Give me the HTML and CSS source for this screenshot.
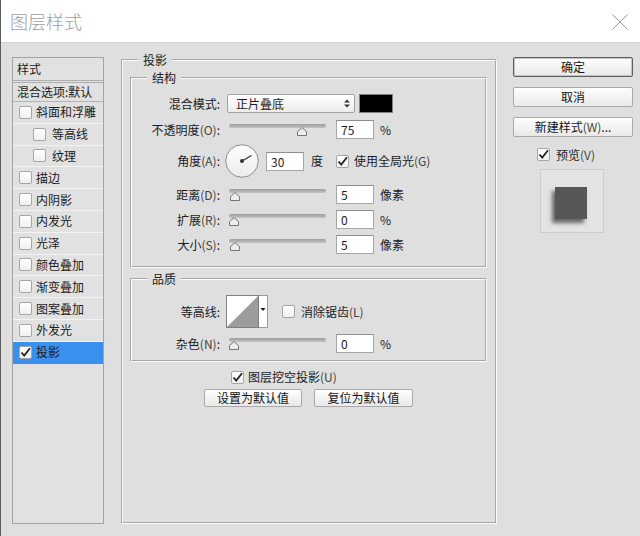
FILE: index.html
```html
<!DOCTYPE html>
<html lang="zh-CN">
<head>
<meta charset="utf-8">
<title>图层样式</title>
<link rel="stylesheet" href="styles.css">
</head>
<body>
<div class="window">
  <header class="titlebar">
    <h1 class="title">图层样式</h1>
    <svg class="close" width="16" height="16" viewBox="0 0 16 16"><path d="M0.5 0.5L15.5 15.5M15.5 0.5L0.5 15.5"/></svg>
  </header>

  <div class="content">
    <aside class="style-list">
      <div class="list-head">样式</div>
      <div class="list-blend">混合选项:默认</div>
      <div class="item"><span class="cb"></span><span class="item-text">斜面和浮雕</span></div>
      <div class="item sub"><span class="cb"></span><span class="item-text">等高线</span></div>
      <div class="item sub"><span class="cb"></span><span class="item-text">纹理</span></div>
      <div class="item"><span class="cb"></span><span class="item-text">描边</span></div>
      <div class="item"><span class="cb"></span><span class="item-text">内阴影</span></div>
      <div class="item"><span class="cb"></span><span class="item-text">内发光</span></div>
      <div class="item"><span class="cb"></span><span class="item-text">光泽</span></div>
      <div class="item"><span class="cb"></span><span class="item-text">颜色叠加</span></div>
      <div class="item"><span class="cb"></span><span class="item-text">渐变叠加</span></div>
      <div class="item"><span class="cb"></span><span class="item-text">图案叠加</span></div>
      <div class="item"><span class="cb"></span><span class="item-text">外发光</span></div>
      <div class="item selected"><span class="cb on"><svg viewBox="0 0 13 13"><path d="M2.5 6.5L5.2 9.6L11 2.2"/></svg></span><span class="item-text">投影</span></div>
    </aside>

    <fieldset class="group outer">
      <legend>投影</legend>

      <fieldset class="group inner">
        <legend>结构</legend>

        <div class="row r-blend">
          <label class="lbl">混合模式:</label>
          <div class="select"><span>正片叠底</span><svg class="updown" width="6" height="9" viewBox="0 0 6 9"><path d="M0 3.5L3 0.5L6 3.5Z M0 5.5L3 8.5L6 5.5Z"/></svg></div>
          <div class="swatch"></div>
        </div>

        <div class="row r-opacity">
          <label class="lbl">不透明度<span class="key">(O)</span>:</label>
          <div class="slider"><div class="track"></div><svg class="thumb" style="left:68px" width="10" height="9" viewBox="0 0 10 9"><path d="M0.5 8.5V4.5L5 0.7L9.5 4.5V8.5Z"/></svg></div>
          <div class="field">75</div>
          <span class="unit">%</span>
        </div>

        <div class="row r-angle">
          <label class="lbl">角度<span class="key">(A)</span>:</label>
          <svg class="dial" width="34" height="34" viewBox="0 0 34 34">
            <defs><linearGradient id="dg" x1="0" y1="0" x2="0" y2="1"><stop offset="0" stop-color="#ffffff"/><stop offset="1" stop-color="#ececec"/></linearGradient></defs>
            <circle cx="17" cy="17" r="16.3" fill="url(#dg)" stroke="#8c8c8c"/>
            <path d="M17 17L26.5 11.5" stroke="#3a3a3a" stroke-width="1.3"/>
            <circle cx="17" cy="17" r="2" fill="#333"/>
          </svg>
          <div class="field f-angle">30</div>
          <span class="unit u-deg">度</span>
          <span class="cb on c-global"><svg viewBox="0 0 13 13"><path d="M2.5 6.5L5.2 9.6L11 2.2"/></svg></span>
          <span class="cb-text">使用全局光<span class="key">(G)</span></span>
        </div>

        <div class="row r-distance">
          <label class="lbl">距离<span class="key">(D)</span>:</label>
          <div class="slider"><div class="track"></div><svg class="thumb" style="left:1px" width="10" height="9" viewBox="0 0 10 9"><path d="M0.5 8.5V4.5L5 0.7L9.5 4.5V8.5Z"/></svg></div>
          <div class="field">5</div>
          <span class="unit">像素</span>
        </div>

        <div class="row r-spread">
          <label class="lbl">扩展<span class="key">(R)</span>:</label>
          <div class="slider"><div class="track"></div><svg class="thumb" style="left:0px" width="10" height="9" viewBox="0 0 10 9"><path d="M0.5 8.5V4.5L5 0.7L9.5 4.5V8.5Z"/></svg></div>
          <div class="field">0</div>
          <span class="unit">%</span>
        </div>

        <div class="row r-size">
          <label class="lbl">大小<span class="key">(S)</span>:</label>
          <div class="slider"><div class="track"></div><svg class="thumb" style="left:1px" width="10" height="9" viewBox="0 0 10 9"><path d="M0.5 8.5V4.5L5 0.7L9.5 4.5V8.5Z"/></svg></div>
          <div class="field">5</div>
          <span class="unit">像素</span>
        </div>
      </fieldset>

      <fieldset class="group inner quality">
        <legend>品质</legend>

        <div class="row r-contour">
          <label class="lbl">等高线:</label>
          <div class="contour">
            <svg class="contour-img" width="33" height="33" viewBox="0 0 33 33"><rect width="33" height="33" fill="#fff"/><path d="M0 33L33 0V33Z" fill="#9c9c9c"/></svg>
            <div class="contour-drop"><svg width="8" height="33" viewBox="0 0 8 33"><path d="M1.5 12L6.5 12L4 15Z" fill="#1a1a1a"/></svg></div>
          </div>
          <span class="cb c-anti"></span>
          <span class="cb-text t-anti">消除锯齿<span class="key">(L)</span></span>
        </div>

        <div class="row r-noise">
          <label class="lbl">杂色<span class="key">(N)</span>:</label>
          <div class="slider"><div class="track"></div><svg class="thumb" style="left:0px" width="10" height="9" viewBox="0 0 10 9"><path d="M0.5 8.5V4.5L5 0.7L9.5 4.5V8.5Z"/></svg></div>
          <div class="field">0</div>
          <span class="unit">%</span>
        </div>
      </fieldset>

      <div class="knockout">
        <span class="cb on"><svg viewBox="0 0 13 13"><path d="M2.5 6.5L5.2 9.6L11 2.2"/></svg></span>
        <span class="cb-text">图层挖空投影<span class="key">(U)</span></span>
      </div>

      <div class="defaults">
        <button class="btn b-def">设置为默认值</button>
        <button class="btn b-def b-reset">复位为默认值</button>
      </div>
    </fieldset>

    <div class="actions">
      <button class="btn primary">确定</button>
      <button class="btn">取消</button>
      <button class="btn">新建样式<span class="key">(W)</span>...</button>
      <div class="preview-toggle">
        <span class="cb on"><svg viewBox="0 0 13 13"><path d="M2.5 6.5L5.2 9.6L11 2.2"/></svg></span>
        <span class="cb-text">预览<span class="key">(V)</span></span>
      </div>
      <div class="preview-box"><div class="preview-square"></div></div>
    </div>
  </div>
</div>
</body>
</html>
```
FILE: styles.css
```css
* { box-sizing: border-box; }
html, body { margin: 0; padding: 0; }
body {
  width: 640px;
  height: 536px;
  overflow: hidden;
  background: #dfdfdf;
  font-family: "Noto Sans CJK SC", "Noto Sans", sans-serif;
  font-size: 12px;
  line-height: 16px;
  color: #1c1c1c;
}

.window {
  display: flex;
  flex-direction: column;
  height: 536px;
  border-left: 1px solid #5c5c5c;
  background: #dfdfdf;
}

/* title bar */
.titlebar {
  height: 43px;
  flex: none;
  display: flex;
  align-items: center;
  justify-content: space-between;
  padding: 0 12px 0 9px;
  background: #ffffff;
  border-bottom: 1px solid #d4d4d4;
}
.title {
  margin: 0;
  font-size: 18px;
  font-weight: 300;
  line-height: 24px;
  color: #9e9e9e;
}
.close { stroke: #9a9a9a; stroke-width: 1; fill: none; margin-top: 2px; }

/* main area */
.content {
  flex: 1;
  display: grid;
  grid-template-columns: 92px 17px 376px 16px 120px;
  padding: 14px 0 12px 11px;
}

/* left style list */
.style-list {
  grid-column: 1;
  display: flex;
  flex-direction: column;
  border: 1px solid #a3a3a3;
  background: #e1e1e1;
}
.list-head {
  height: 25px;
  padding: 3px 0 0 4px;
  border-bottom: 3px double #aeaeae;
}
.list-blend {
  height: 19px;
  padding: 1px 0 0 4px;
  border-bottom: 1px solid #b4b4b4;
  white-space: nowrap;
}
.item {
  height: 21.8px;
  display: flex;
  align-items: center;
  padding-left: 6px;
  border-bottom: 1px solid #f3f3f3;
  flex: none;
}
.item.sub { padding-left: 20px; }
.item-text { margin-left: 4px; }
.item.sub .item-text { margin-left: 6px; }
.item.selected { background: #3a90ef; border-bottom-color: #3a90ef; }

/* checkbox */
.cb {
  width: 13px;
  height: 13px;
  flex: none;
  display: inline-block;
  border: 1px solid #a6a6a6;
  border-radius: 2px;
  background: linear-gradient(#ffffff, #f0f0f0);
}
.cb svg { display: block; width: 13px; height: 13px; margin: -1px 0 0 -1px; }
.cb svg path { fill: none; stroke: #1f1f1f; stroke-width: 1.7; }
.cb-text { white-space: nowrap; }

/* fieldsets */
.group {
  margin: 0;
  min-width: 0;
  border: 2px groove #fbfbfb;
}
.group > legend {
  padding: 0 5px;
  line-height: 16px;
}
.outer {
  grid-column: 3;
  margin-top: -5px;
  padding: 0 8px 0 7px;
}
.outer > legend { margin-left: 8px; }
.inner {
  margin-top: 2px;
  padding: 0 0 12px 0;
}
.inner > legend { margin-left: 15px; }
.quality { margin-top: 3px; padding-bottom: 7px; }

.key { color: #44443a; }

.row {
  display: flex;
  align-items: center;
  height: 19px;
}
.lbl {
  width: 88px;
  flex: none;
  text-align: right;
  white-space: nowrap;
}

.r-blend { margin-top: 8px; }
.r-opacity { margin-top: 7px; }
.r-angle { margin-top: 5px; height: 34px; }
.r-distance { margin-top: 7px; }
.r-spread { margin-top: 6px; }
.r-size { margin-top: 6px; }
.r-contour { margin-top: 8px; height: 33px; }
.r-noise { margin-top: 6px; }

.select {
  width: 128px;
  height: 19px;
  margin-left: 7px;
  display: flex;
  align-items: center;
  justify-content: space-between;
  padding: 0 4px 0 8px;
  border: 1px solid #a2a2a2;
  border-radius: 2px;
  background: linear-gradient(#ffffff, #ececec);
}
.updown { fill: #333; }
.swatch {
  width: 34px;
  height: 19px;
  margin-left: 4px;
  background: #000;
  border: 1px solid #808080;
}

.slider {
  position: relative;
  width: 97px;
  height: 19px;
  margin-left: 9px;
}
.track {
  margin-top: 4px;
  height: 4px;
  border-radius: 2px;
  background: linear-gradient(#9c9c9c, #c4c4c4);
}
.thumb {
  position: absolute;
  top: 7px;
  fill: #ececec;
  stroke: #767676;
  stroke-width: 1;
}

.field {
  width: 38px;
  height: 19px;
  margin-left: 10px;
  padding: 1px 0 0 4px;
  background: #fff;
  border: 1px solid #a6a6a6;
  border-top-color: #8e8e8e;
}
.unit { margin-left: 6px; }

.dial { margin-left: 5px; flex: none; }
.f-angle { margin-left: 7px; }
.u-deg { margin-left: 7px; }
.c-global { margin-left: 13px; }
.c-global + .cb-text { margin-left: 5px; }

.contour {
  margin-left: 6px;
  display: flex;
  height: 33px;
}
.contour-img { display: block; border: 1px solid #808080; }
.contour-drop {
  width: 9px;
  height: 33px;
  background: #fff;
  border: 1px solid #9a9a9a;
  border-left: none;
}
.contour-drop svg { display: block; }
.c-anti { margin-left: 14px; }
.t-anti { margin-left: 6px; }

.knockout {
  display: flex;
  align-items: center;
  height: 14px;
  margin-top: 8px;
  padding-left: 101px;
}
.knockout .cb-text { margin-left: 4px; }

.defaults {
  display: flex;
  justify-content: center;
  gap: 12px;
  margin-top: 5px;
}

/* buttons */
.btn {
  font-family: inherit;
  font-size: 12px;
  line-height: 16px;
  color: #141414;
  height: 20px;
  padding: 0;
  border: 1px solid #a9a9a9;
  border-radius: 2px;
  background: linear-gradient(#fefefe, #e9e9e9);
  white-space: nowrap;
}
.b-def { width: 98px; height: 18px; }
.b-reset { width: 99px; }
.btn.primary {
  border-color: #5e5e5e;
  box-shadow: inset 0 0 0 1px #c4c4c4;
}

.actions {
  grid-column: 5;
  display: flex;
  flex-direction: column;
  align-self: start;
}
.actions .btn + .btn { margin-top: 10px; }

.preview-toggle {
  display: flex;
  align-items: center;
  height: 13px;
  margin: 11px 0 0 24px;
}
.preview-toggle .cb-text { margin-left: 6px; }

.preview-box {
  width: 64px;
  height: 64px;
  margin: 8px 0 0 27px;
  border: 1px solid #cdcdcd;
  background: #e3e3e3;
  padding: 17px 0 0 14px;
}
.preview-square {
  width: 32px;
  height: 32px;
  background: #575757;
  box-shadow: -3px 4px 4px rgba(0, 0, 0, 0.55);
}
```
